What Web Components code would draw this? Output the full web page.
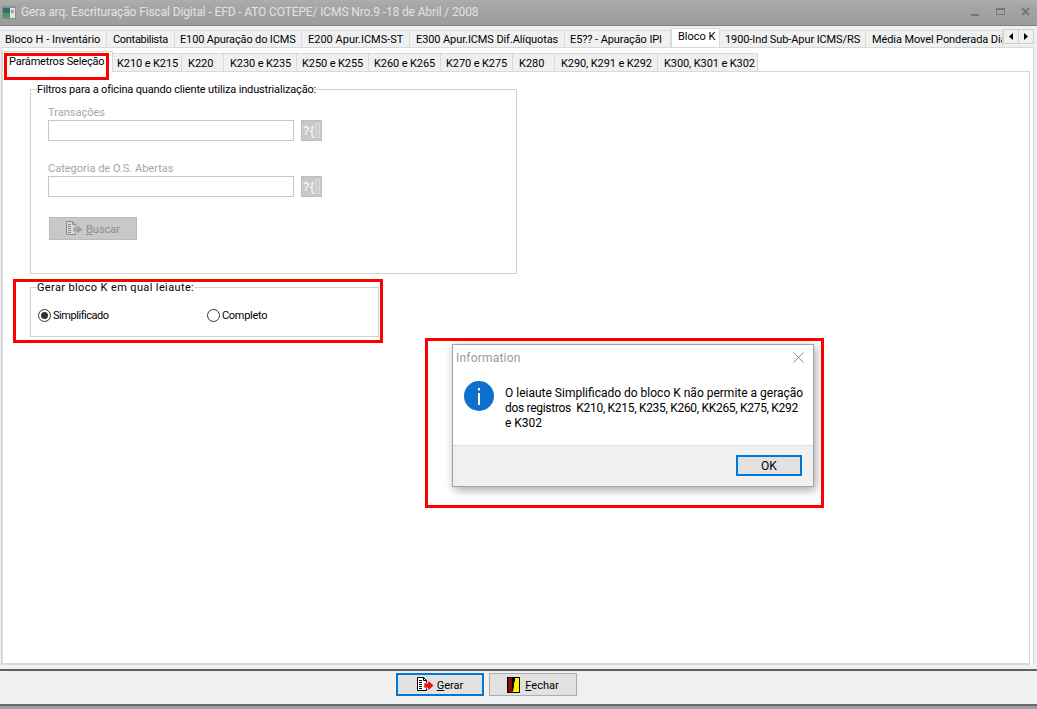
<!doctype html>
<html lang="pt"><head><meta charset="utf-8"><title>Gera arq.</title>
<style>
html,body{margin:0;height:709px;overflow:hidden;background:#fff}
body{font:11px Roboto,"Noto Sans",sans-serif;color:#000}
</style></head><body>
<app-window title-text="Gera arq. Escrituração Fiscal Digital - EFD - ATO COTEPE/ ICMS Nro.9 -18 de Abril / 2008">
  <tab-strip slot="tabs" level="1">
    <tab-item w="107" pad="5">Bloco H - Inventário</tab-item>
    <tab-item w="68" pad="6" ls="-.3">Contabilista</tab-item>
    <tab-item w="127" pad="5" ls="-.15">E100 Apuração do ICMS</tab-item>
    <tab-item w="108" pad="6">E200 Apur.ICMS-ST</tab-item>
    <tab-item w="155" pad="6" ls="-.1">E300 Apur.ICMS Dif.Alíquotas</tab-item>
    <tab-item w="106" pad="5" ls="-.1">E5?? - Apuração IPI</tab-item>
    <tab-item w="49" pad="6" active>Bloco K</tab-item>
    <tab-item w="146" pad="5" ls="-.1">1900-Ind Sub-Apur ICMS/RS</tab-item>
    <tab-item w="137" pad="6" ls="-.1">Média Movel Ponderada Diária</tab-item>
  </tab-strip>
  <tab-strip slot="subtabs" level="2">
    <tab-item w="111" pad="6" top="2" ls="-.18" active>Parâmetros Seleção</tab-item>
    <tab-item w="69" pad="4" top="2" ls="-.1">K210 e K215</tab-item>
    <tab-item w="42" pad="6" top="2">K220</tab-item>
    <tab-item w="73" pad="6" top="2" ls="-.1">K230 e K235</tab-item>
    <tab-item w="72" pad="5" top="2" ls="-.1">K250 e K255</tab-item>
    <tab-item w="72" pad="5" top="2" ls="-.1">K260 e K265</tab-item>
    <tab-item w="72" pad="5" top="2" ls="-.1">K270 e K275</tab-item>
    <tab-item w="42" pad="6" top="2">K280</tab-item>
    <tab-item w="103" pad="6" top="2" ls="-.1">K290, K291 e K292</tab-item>
    <tab-item w="100" pad="6" top="2" ls="-.1">K300, K301 e K302</tab-item>
  </tab-strip>
  <group-box label="Filtros para a oficina quando cliente utiliza industrialização:" ls="-.16" style="--w:487px;--h:185px;--mt:17px">
    <lookup-field label="Transações"></lookup-field>
    <lookup-field label="Categoria de O.S. Abertas"></lookup-field>
    <cmd-button disabled icon="doc" accel="B" rest="uscar" style="margin:1px 0 0 1px"></cmd-button>
  </group-box>
  <group-box label="Gerar bloco K em qual leiaute:" ls=".37" style="--w:349px;--h:50px;--mt:13px;--pad:20px 0 0 7px">
    <radio-row>
      <radio-option checked style="width:169px;letter-spacing:-.45px">Simplificado</radio-option>
      <radio-option style="letter-spacing:-.3px">Completo</radio-option>
    </radio-row>
  </group-box>
  <cmd-button slot="footer" focus icon="doc" accel="G" rest="erar"></cmd-button>
  <cmd-button slot="footer" icon="door" accel="F" rest="echar"></cmd-button>
</app-window>
<red-mark style="left:4px;top:53px;width:105px;height:27px"></red-mark>
<red-mark style="left:13px;top:279px;width:370px;height:64px"></red-mark>
<red-mark style="left:425px;top:338px;width:399px;height:170px"></red-mark>
<info-dialog heading="Information">O leiaute Simplificado do bloco K não permite a geração<br><span style="letter-spacing:-.3px">dos registros&nbsp; K210, K215, K235, K260, KK265, K275, K292</span><br>e K302</info-dialog>

<script>
const def=(n,html)=>{
  customElements.define(n,class extends HTMLElement{
    connectedCallback(){
      if(this.shadowRoot)return;
      const s=this.attachShadow({mode:'open'});
      s.innerHTML=typeof html==='function'?html(this):html;
    }
  });
};
const docIcon=(on)=>{
  const ln=on?'#000':'#8a8a8a',ar=on?'#ea0f1a':'#a2a2a2',bg=on?'#fff':'#d8d8d8',hl=on?'#fff':'#e2e2e2';
  return `<svg width="17" height="15" viewBox="0 0 17 15" style="flex:none"><path d="M.5.5h6l3 3v10h-9z" fill="${bg}" stroke="${ln}"/><path d="M2 3.5h3M2 5.5h3M2 7.5h3M2 9.5h3M2 11.5h3M6.5.5v3h3" fill="none" stroke="${ln}"/><path d="M7 6h4V3l6 5.5L11 14v-3H7z" fill="${ar}" stroke="${hl}" stroke-width=".6"/></svg>`;
};
const doorIcon=`<svg width="13" height="16" viewBox="0 0 13 16" style="flex:none"><rect width="13" height="16" fill="#000"/><rect x="1" y="1" width="4" height="14" fill="#7e1010"/><path d="M5 1h7v14H5l1-1 1-5V6L8 4V1z" fill="#ffee00"/><rect x="6" y="7" width="1" height="2" fill="#000"/></svg>`;

def('app-window',t=>`<style>
:host{display:flex;flex-direction:column;width:1037px;height:709px;background:#f0f0f0;box-sizing:border-box}
.title{height:26px;flex:none;box-sizing:border-box;display:flex;align-items:center;background:linear-gradient(#adadad 0,#a6a6a6 6px,#9c9c9c 100%);border-bottom:1px solid #7f7f7f;color:#e2e2e2;font:12px Roboto,sans-serif;padding:0 0 1px 2px}
.title span{margin-left:5px;white-space:nowrap;letter-spacing:-.13px}
.ctl{margin-left:auto;display:flex;align-items:center;margin-right:5px}
.tabs{padding-top:4px;height:17px;flex:none;display:flex;position:relative}
.arrows{display:flex;width:31px;margin:-1px 3px 0 0;height:15px;flex:none;position:relative;z-index:3}
.arrows i{flex:1;border:1px solid #cfcfcf;background:#f0f0f0;display:flex;align-items:center;justify-content:center;box-sizing:border-box}
.arrows i+i{border-left:0}
.outer{flex:none;height:618px;box-sizing:border-box;border:1px solid #d9d9d9;border-bottom:0;background:#fff;margin:0 3px 0 1px;padding:5px 3px 0 0;display:flex;flex-direction:column}
.inner{flex:1;box-sizing:border-box;border:1px solid #d9d9d9;border-bottom-width:2px;padding:0 0 0 27px;min-height:0}
.foot{flex:none;height:35px;box-sizing:border-box;border-top:2px solid #5f6163;margin-top:4px;background:#f0f0f0;display:flex;gap:5px;padding:2px 0 0 396px}
.foot2{height:5px;flex:none;background:#a0a0a0;border-top:2px solid #6a6a6a;box-sizing:border-box}
</style>
<div class="title">
<svg width="14" height="13" viewBox="0 0 14 13" style="flex:none"><rect width="14" height="13" fill="#8e8e8e"/><rect x="1" y="2" width="7" height="10" fill="#2c6f78"/><rect x="1" y="7" width="7" height="5" fill="#4f9a58"/><rect x="8" y="2" width="5" height="10" fill="#dfe5e5"/><rect x="9" y="4" width="3" height="3" fill="#98a8a8"/></svg>
<span>${t.getAttribute('title-text')}</span>
<div class="ctl">
<svg width="62" height="12" viewBox="0 0 62 12"><rect x="1" y="8" width="8" height="2" fill="#777"/><path d="M26.5 2.5h8v6h-8z" fill="none" stroke="#777"/><rect x="26" y="2" width="9" height="2" fill="#777"/><path d="M52 2l7 7M59 2l-7 7" stroke="#777" stroke-width="2" fill="none"/></svg>
</div></div>
<div class="tabs"><slot name="tabs"></slot><div class="arrows"><i><svg width="4" height="7"><path d="M4 0v7L0 3.5z"/></svg></i><i><svg width="4" height="7"><path d="M0 0v7l4-3.5z"/></svg></i></div></div>
<div class="outer"><slot name="subtabs"></slot><div class="inner"><slot></slot></div></div>
<div class="foot"><slot name="footer"></slot></div>
<div class="foot2"></div>`);

def('tab-strip',t=>{
  const l2=t.getAttribute('level')==='2';
  return `<style>:host{display:flex;flex:none;position:relative;height:${l2?18:17}px;${l2?'':'width:1003px;overflow:hidden;padding-top:3px;margin-top:-3px;'}}</style><slot></slot>`;
});

def('tab-item',t=>{
 const a=t.hasAttribute('active');
 const pad=+t.getAttribute('pad');
 const top=t.hasAttribute('top')?+t.getAttribute('top'):(a?0:1);
 const ls=t.getAttribute('ls')||'0';
 return `<style>:host{display:block;flex:none;width:${t.getAttribute('w')}px;box-sizing:border-box;height:${a?'21px':'100%'};margin-top:${a?'-2px':'0'};background:${a?'#fff':'#f0f0f0'};border:1px solid #d9d9d9;border-left-width:${a?1:0}px;border-bottom:0;padding:${top}px 0 0 ${pad}px;white-space:nowrap;overflow:hidden;line-height:15px;letter-spacing:${ls}px;position:relative;z-index:${a?2:1}}</style><slot></slot>`;
});

def('group-box',t=>`<style>:host{display:block;box-sizing:border-box;width:var(--w);height:var(--h);margin-top:var(--mt);border:1px solid #d0d0d0;position:relative;padding:var(--pad,14px 0 0 17px)}
.lg{position:absolute;left:6px;top:-8px;background:#fff;white-space:nowrap;line-height:15px;letter-spacing:${t.getAttribute('ls')||0}px}</style><div class="lg">${t.getAttribute('label')}</div><slot></slot>`);

def('lookup-field',t=>`<style>:host{display:block;color:#a5a5a5;height:56px}
.l{line-height:15px;height:15px;padding-top:1px}
.r{display:flex;gap:7px}
.i{width:246px;height:21px;box-sizing:border-box;border:1px solid #c6c6c6;background:#fff}
.b{width:21px;height:21px;background:#c8c8c8;color:#f0f0f0;box-sizing:border-box;font:bold 12px "Liberation Sans",sans-serif;display:flex;align-items:center;justify-content:center;white-space:nowrap;border:1px solid #bdbdbd}
</style><div class="l">${t.getAttribute('label')}</div><div class="r"><div class="i"></div><div class="b"><span>?{</span><svg width="6" height="15" viewBox="0 0 6 15" style="flex:none"><path d="M1.5.5h3v14h-3z" fill="none" stroke="#f0f0f0" stroke-dasharray="1 1"/></svg></div></div>`);

def('cmd-button',t=>{
 const dis=t.hasAttribute('disabled'),foc=t.hasAttribute('focus'),door=t.getAttribute('icon')==='door';
 return `<style>:host{display:flex;flex:none;width:88px;height:23px;box-sizing:border-box;align-items:center;justify-content:center;gap:${door?5:3}px;background:${dis?'#c8c8c8':'#e1e1e1'};border:${foc?'2px solid #0078d7':'1px solid #adadad'};color:${dis?'#8d8d8d':'#000'};${dis?'border-color:#bbb;':''}line-height:15px}
span{padding-top:1px}
u{text-decoration:underline}</style>${door?doorIcon:docIcon(!dis)}<span><u>${t.getAttribute('accel')}</u>${t.getAttribute('rest')}</span>`;
});

def('radio-row','<style>:host{display:flex}</style><slot></slot>');
def('radio-option',t=>`<style>:host{display:flex;align-items:center;gap:2px;line-height:15px;box-sizing:border-box}
svg{flex:none}</style><svg width="13" height="13" viewBox="0 0 13 13"><circle cx="6.5" cy="6.5" r="6" fill="#fff" stroke="#333"/>${t.hasAttribute('checked')?'<circle cx="6.5" cy="6.5" r="3.5" fill="#333"/>':''}</svg><slot></slot>`);

def('red-mark','<style>:host{position:absolute;z-index:5;box-sizing:border-box;border:3px solid #f00;display:block;pointer-events:none}</style>');

def('info-dialog',t=>`<style>:host{position:absolute;z-index:6;left:452px;top:344px;width:362px;height:143px;box-sizing:border-box;background:#fff;border:1px solid #a3a3a3;box-shadow:2px 3px 9px rgba(0,0,0,.35);display:flex;flex-direction:column;font:12px Roboto,sans-serif}
.h{height:25px;flex:none;display:flex;align-items:center;justify-content:space-between;padding:0 9px 0 3px;color:#9a9a9a;letter-spacing:.2px}
.m{flex:1;display:flex;padding:11px 0 0 11px;gap:11px;color:#000;line-height:15px}
.t{margin-top:5px;width:305px;white-space:nowrap}
.f{height:41px;flex:none;background:#f0f0f0;border-top:1px solid #dfdfdf;box-sizing:border-box;display:flex;justify-content:flex-end;padding:9px 11px 0 0}
.ok{width:66px;height:21px;box-sizing:border-box;border:2px solid #0078d7;background:#e1e1e1;display:flex;align-items:center;justify-content:center}
</style><div class="h"><span>${t.getAttribute('heading')}</span><svg width="11" height="11" viewBox="0 0 11 11" style="flex:none"><path d="M.5.5l10 10M10.5.5l-10 10" stroke="#8a8a8a" fill="none"/></svg></div>
<div class="m"><svg width="30" height="30" viewBox="0 0 30 30" style="flex:none"><circle cx="15" cy="15" r="15" fill="#0d70cc"/><rect x="14" y="12" width="2" height="12" fill="#fff"/><rect x="14" y="7" width="2" height="2.4" fill="#fff"/></svg><div class="t"><slot></slot></div></div>
<div class="f"><div class="ok">OK</div></div>`);
</script>
</body></html>
